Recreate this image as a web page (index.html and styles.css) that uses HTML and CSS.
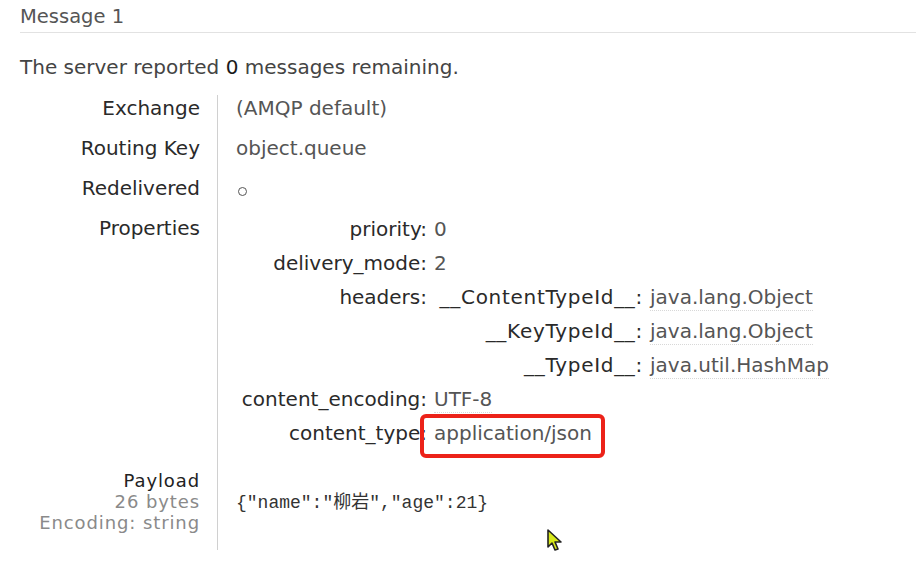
FILE: index.html
```html
<!DOCTYPE html>
<html>
<head>
<meta charset="utf-8">
<link rel="stylesheet" href="styles.css">
</head>
<body>
<div class="page">
  <h3 class="title">Message 1</h3>
  <p class="summary">The server reported <span class="num">0</span> messages remaining.</p>
  <div class="facts">
    <div class="label">Exchange</div>
    <div class="value">(AMQP default)</div>

    <div class="label">Routing Key</div>
    <div class="value">object.queue</div>

    <div class="label">Redelivered</div>
    <div class="value"><span class="circle"></span></div>

    <div class="label props-label">Properties</div>
    <div class="value props-value">
      <div class="props">
        <div class="pk">priority:</div><div class="pv">0</div>
        <div class="pk">delivery_mode:</div><div class="pv">2</div>
        <div class="pk">headers:</div>
        <div class="pv">
          <div class="hdrs">
            <div class="hk">__ContentTypeId__:</div><div class="hv"><span class="dot">java.lang.Object</span></div>
            <div class="hk">__KeyTypeId__:</div><div class="hv"><span class="dot">java.lang.Object</span></div>
            <div class="hk">__TypeId__:</div><div class="hv"><span class="dot">java.util.HashMap</span></div>
          </div>
        </div>
        <div class="pk">content_encoding:</div><div class="pv"><span class="dot">UTF-8</span></div>
        <div class="pk">content_type:</div><div class="pv"><span class="marked">application/json</span></div>
      </div>
    </div>

    <div class="label payload-label">
      <div class="pl-main">Payload</div>
      <div class="pl-sub">26 bytes</div>
      <div class="pl-sub">Encoding: string</div>
    </div>
    <div class="value payload-value"><code class="payload">{"name":"柳岩","age":21}</code></div>
  </div>
</div>
<svg class="cursor" width="20" height="26" viewBox="0 0 20 26">
  <path d="M2 2 L2 19 L6 15 L9 22 L12 21 L9 14 L15 14 Z" fill="#d7e81a" stroke="#222" stroke-width="1.6" stroke-linejoin="round"/>
</svg>
</body>
</html>
```
FILE: styles.css
```css
html, body {
  margin: 0;
  padding: 0;
  background: #fff;
}
body {
  font-family: "DejaVu Sans", Verdana, sans-serif;
  font-size: 20px;
  color: #333;
  width: 916px;
  height: 572px;
  overflow: hidden;
  position: relative;
}
.page {
  padding-left: 20px;
}
.title {
  margin: 0;
  font-weight: normal;
  font-size: 19.5px;
  line-height: 24px;
  padding: 5px 0 3px;
  color: #555;
  border-bottom: 1px solid #e2e2e2;
}
.summary {
  margin: 22px 0 0;
  line-height: 24px;
  color: #444;
}
.num {
  color: #1a1a1a;
}
.facts {
  margin-top: 16px;
  display: grid;
  grid-template-columns: 197px 1fr;
}
.label {
  text-align: right;
  padding: 0 17px 14px 0;
  line-height: 26px;
  color: #2a2a2a;
}
.value {
  border-left: 1px solid #d0d0d0;
  padding: 0 0 14px 18px;
  line-height: 26px;
  color: #555;
}
.circle {
  display: inline-block;
  width: 7px;
  height: 7px;
  border: 1px solid #555;
  border-radius: 50%;
  margin-left: 2px;
  vertical-align: -1px;
}
.props-label {
  padding-bottom: 0;
}
.props-value {
  padding-bottom: 0;
}
.props {
  margin-top: -3px;
  display: grid;
  grid-template-columns: 191px auto;
  column-gap: 7px;
  line-height: 34px;
  align-items: start;
}
.pk {
  text-align: right;
  color: #2a2a2a;
  white-space: nowrap;
  height: 34px;
}
.pv {
  color: #555;
  white-space: nowrap;
}
.hdrs {
  display: grid;
  grid-template-columns: 209px auto;
  grid-auto-rows: 34px;
  column-gap: 7px;
}
.hk {
  text-align: right;
  color: #2a2a2a;
  letter-spacing: 0.7px;
}
.hv {
  color: #555;
}
.dot {
  border-bottom: 1px dotted #d8d8d8;
  padding-bottom: 1px;
}
.marked {
  position: relative;
}
.marked::after {
  content: "";
  position: absolute;
  left: -14px;
  right: -13px;
  top: -7px;
  bottom: -13px;
  border: 4px solid #ec2219;
  border-radius: 6px;
}
.payload-label {
  padding-top: 20px;
  padding-bottom: 17px;
  line-height: 21px;
  font-size: 18px;
  letter-spacing: 0.9px;
}
.pl-main {
  color: #222;
}
.pl-sub {
  color: #8a8a8a;
}
.payload-value {
  padding-top: 21px;
  padding-bottom: 17px;
}
.payload {
  display: block;
  margin-top: 22px;
  font-family: "Liberation Mono", "Noto Sans CJK SC", monospace;
  font-size: 18px;
  line-height: 20px;
  color: #333;
}
.cursor {
  position: absolute;
  left: 546px;
  top: 528px;
}
```
